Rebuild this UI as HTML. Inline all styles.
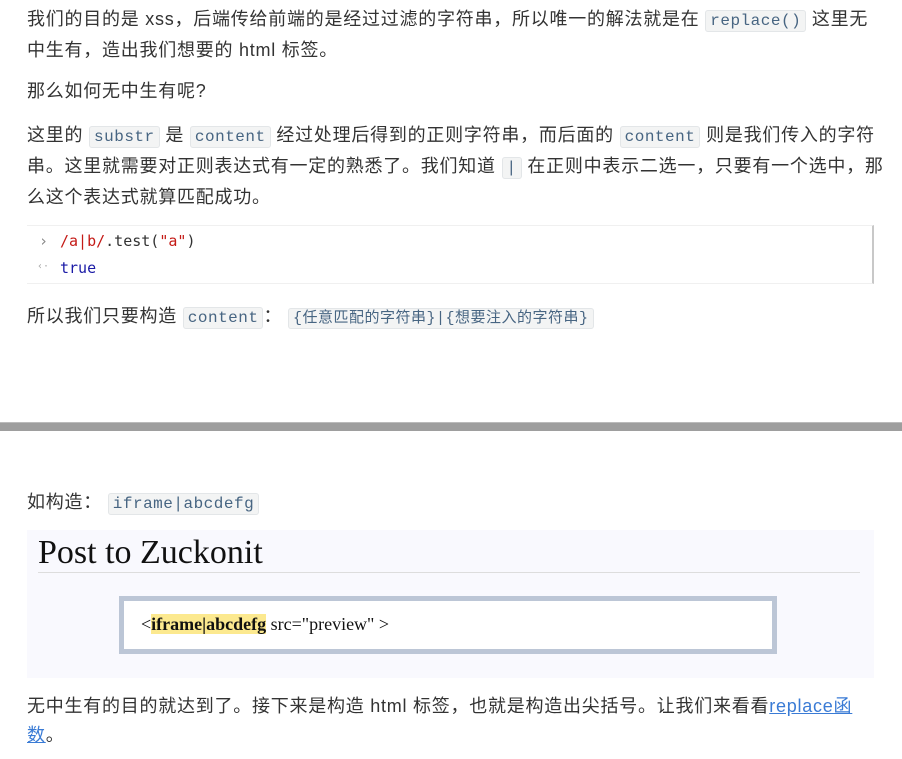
<!DOCTYPE html>
<html><head><meta charset="utf-8"><style>
body{margin:0;width:902px;height:759px;background:#fff;overflow:hidden;font-family:"Liberation Sans","Noto Sans CJK SC",sans-serif;color:#333;font-size:18px}
.p{position:absolute;left:27px;white-space:nowrap;line-height:29px;letter-spacing:0.75px}
code{font-family:"Liberation Mono","Noto Sans CJK SC",monospace;font-size:16px;background:#f3f4f4;border:1px solid #e3e6e8;border-radius:3px;padding:1px 4px;color:#476582;letter-spacing:0.5px}
.cb{position:absolute;left:27px;top:225px;width:845px;height:57px;border-top:1px solid #f0f0f0;border-bottom:1px solid #f0f0f0;border-right:2px solid #c8c8c8;font-family:"DejaVu Sans Mono",monospace;font-size:15px}
</style></head><body>
<div class="p" style="top:5px">我们的目的是 xss，后端传给前端的是经过过滤的字符串，所以唯一的解法就是在 <code>replace()</code> 这里无<br>中生有，造出我们想要的 html 标签。</div>
<div class="p" style="top:77px">那么如何无中生有呢?</div>
<div class="p" style="top:121px">这里的 <code>substr</code> 是 <code>content</code> 经过处理后得到的正则字符串，而后面的 <code>content</code> 则是我们传入的字符<br>串。这里就需要对正则表达式有一定的熟悉了。我们知道 <code>|</code> 在正则中表示二选一，只要有一个选中，那<br>么这个表达式就算匹配成功。</div>
<div class="cb">
<div style="position:absolute;left:12px;top:6px;color:#888">›</div>
<div style="position:absolute;left:33px;top:6px;color:#333"><span style="color:#c41a16">/a|b/</span>.test(<span style="color:#c41a16">"a"</span>)</div>
<div style="position:absolute;left:10px;top:35px;color:#aaa;font-size:10px">‹·</div>
<div style="position:absolute;left:33px;top:33px;color:#1a1aa6">true</div>
</div>
<div class="p" style="top:302px">所以我们只要构造 <code>content</code>： <code style="font-size:15px">{任意匹配的字符串}|{想要注入的字符串}</code></div>
<div style="position:absolute;left:0;top:422px;width:902px;height:8px;background:#9e9e9e;border-top:1px solid #bbb"></div>
<div class="p" style="top:488px">如构造： <code style="font-size:16px">iframe|abcdefg</code></div>
<div style="position:absolute;left:27px;top:530px;width:847px;height:148px;background:#f9f9fe">
<div style="position:absolute;left:11px;top:4px;font-family:'Liberation Serif',serif;font-size:34px;color:#111">Post to Zuckonit</div>
<div style="position:absolute;left:11px;top:42px;width:822px;height:1px;background:#ddd"></div>
<div style="position:absolute;left:92px;top:66px;width:648px;height:48px;border:5px solid #bcc6d6;background:#fff;font-family:'Liberation Serif',serif;font-size:18px;color:#111">
<div style="position:absolute;left:17px;top:13px">&lt;<b style="background:#fce98f">iframe|abcdefg</b> src="preview" &gt;</div></div>
</div>
<div class="p" style="top:692px">无中生有的目的就达到了。接下来是构造 html 标签，也就是构造出尖括号。让我们来看看<a style="color:#3a7bd5;text-decoration:underline">replace函</a><br><a style="color:#3a7bd5;text-decoration:underline">数</a>。</div>
</body></html>
